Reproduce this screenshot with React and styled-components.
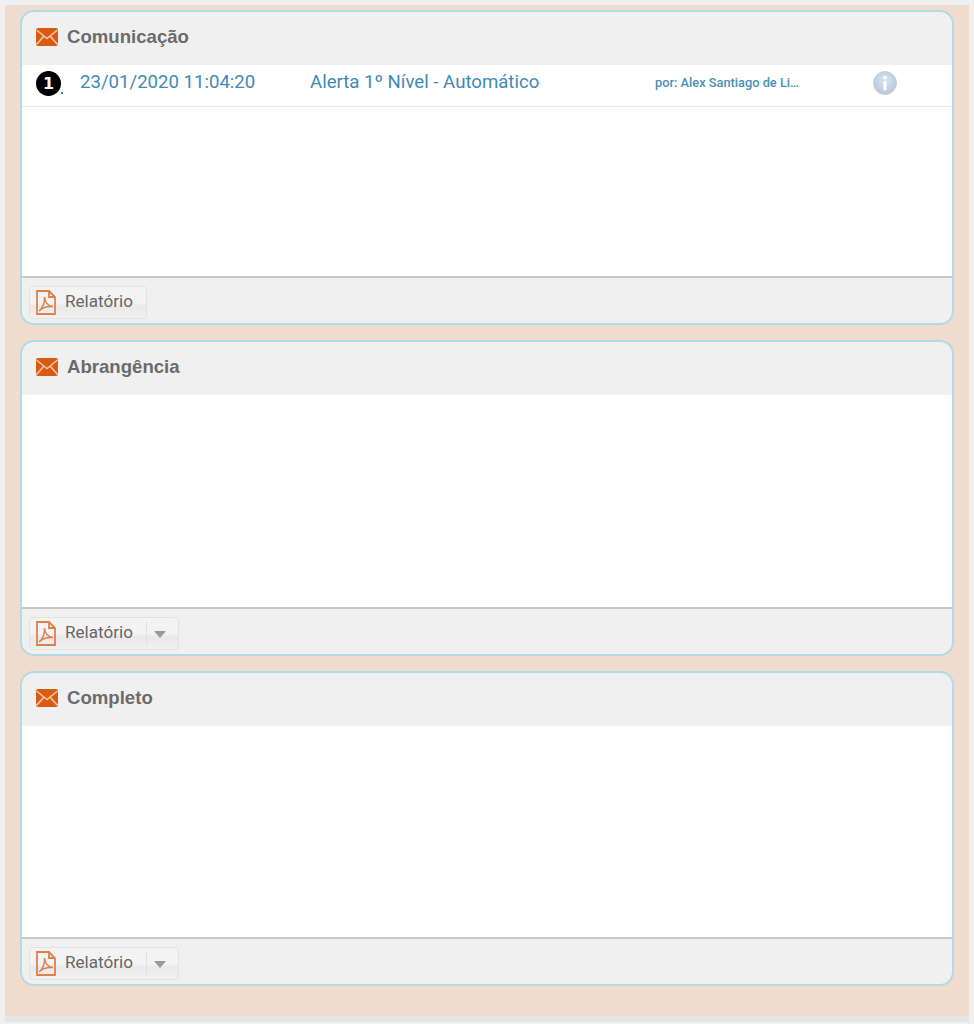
import styled, { createGlobalStyle } from "styled-components";

const GlobalStyle = createGlobalStyle`
    html, body {
        margin: 0;
        padding: 0;
        background: #f0f0f0;
        font-family: "Liberation Sans", Arial, sans-serif;
    }
`;

const Page = styled.div`
    width: 974px;
    height: 1024px;
    box-sizing: border-box;
    background: #f0f0f0;
    padding: 5px 5px 0;
`;

const Canvas = styled.div`
    height: 1017px;
    box-sizing: border-box;
    background: #f0dccd;
    border-bottom: 6px solid #e5e5e5;
    padding: 5px 15px 0;
    display: flex;
    flex-direction: column;
    gap: 15px;
`;

const Panel = styled.section`
    height: ${(props) => props.$height}px;
    flex: none;
    box-sizing: border-box;
    display: flex;
    flex-direction: column;
    background: #f0f0f0;
    border: 2px solid #b0dce8;
    border-radius: 14px;
    overflow: hidden;
`;

const PanelHeader = styled.header`
    height: 53px;
    flex: none;
    box-sizing: border-box;
    display: flex;
    align-items: center;
    gap: 9px;
    padding: 0 0 3px 14px;
`;

const PanelTitle = styled.h2`
    margin: 0;
    font-size: 18.6px;
    font-weight: bold;
    color: #6b6b6b;
`;

const PanelBody = styled.div`
    flex: 1;
    background: #fff;
    border-bottom: 2px solid #c8c8c8;
`;

const PanelFooter = styled.footer`
    height: 45px;
    flex: none;
    box-sizing: border-box;
    padding: 8px 0 0 7px;
`;

const Row = styled.div`
    height: 42px;
    box-sizing: border-box;
    display: flex;
    align-items: center;
    border-bottom: 1px solid #e8e8e8;
    color: #3f8ab5;
    position: relative;
`;

const Badge = styled.span`
    width: 25px;
    height: 25px;
    margin-left: 14px;
    margin-top: -4px;
    flex: none;
    border-radius: 50%;
    background: #000;
    color: #fff;
    font-family: "DejaVu Sans", sans-serif;
    font-size: 16px;
    font-weight: bold;
    display: flex;
    align-items: center;
    justify-content: center;
`;

const Dot = styled.span`
    position: absolute;
    left: 39px;
    top: 27px;
    width: 2px;
    height: 2px;
    background: #3f8ab5;
`;

const DateText = styled.span`
    width: 230px;
    margin-left: 19px;
    margin-top: -7px;
    flex: none;
    font-family: Roboto, sans-serif;
    font-size: 18.6px;
`;

const AlertText = styled.span`
    width: 345px;
    margin-top: -7px;
    flex: none;
    font-family: Roboto, sans-serif;
    font-size: 18.6px;
`;

const AuthorText = styled.span`
    width: 144px;
    margin-top: -6px;
    flex: none;
    font-family: Roboto, sans-serif;
    font-size: 12.8px;
    font-weight: 500;
    color: #4a90b8;
    white-space: nowrap;
`;

const InfoWrap = styled.span`
    width: 24px;
    height: 24px;
    margin-left: 74px;
    margin-top: -6px;
    flex: none;
    display: flex;
`;

const ReportButton = styled.div`
    display: inline-flex;
    align-items: center;
    height: 33px;
    box-sizing: border-box;
    padding: 0 13px 0 6px;
    border: 1px solid #e2e2e2;
    border-radius: 4px;
    background: linear-gradient(#f3f3f3 50%, #e9e9e9 62%, #f1f1f1);
    font-family: Roboto, sans-serif;
    font-size: 17.1px;
    color: #666;
`;

const ReportLabel = styled.span`
    margin-left: 9px;
    padding-bottom: 4px;
`;

const Divider = styled.span`
    width: 1px;
    height: 24px;
    margin-left: 13px;
    background: #e0e0e0;
`;

const Caret = styled.span`
    margin: 2px -1px 0 7px;
    width: 0;
    height: 0;
    border-left: 6px solid transparent;
    border-right: 6px solid transparent;
    border-top: 7px solid #999;
`;

const MailIcon = () => (
    <svg width="22" height="18" viewBox="0 0 22 18">
        <rect width="22" height="18" rx="2" fill="#d95a10" />
        <path
            d="M0.5 2 L11 10.5 L21.5 2 M0.5 16.5 L8 8 M21.5 16.5 L14 8"
            fill="none"
            stroke="#f3c8a8"
            strokeWidth="1.6"
        />
    </svg>
);

const PdfIcon = () => (
    <svg width="20" height="25" viewBox="0 0 20 25">
        <path
            d="M1 1 H13 L19 7 V24 H1 Z M13 1 V7 H19"
            fill="none"
            stroke="#e07f4c"
            strokeWidth="1.8"
        />
        <path
            d="M3 21 C7 18 9 12 8.5 7 C9 12 12 16 17 16.5 C12 16 7 17 3 21 Z"
            fill="none"
            stroke="#e07f4c"
            strokeWidth="1.5"
        />
    </svg>
);

const InfoIcon = () => (
    <svg width="24" height="24" viewBox="0 0 24 24">
        <defs>
            <radialGradient id="infoFill" cx="50%" cy="40%" r="60%">
                <stop offset="0%" stopColor="#dbe6f2" />
                <stop offset="100%" stopColor="#b4c7dc" />
            </radialGradient>
        </defs>
        <circle cx="12" cy="12" r="11.5" fill="url(#infoFill)" stroke="#c6d0da" />
        <circle cx="12" cy="6.5" r="1.8" fill="#fff" />
        <rect x="10.6" y="10" width="2.8" height="9.5" rx="1" fill="#fff" />
    </svg>
);

const panels = [
    { title: "Comunicação", height: 315, hasRow: true, hasMenu: false },
    { title: "Abrangência", height: 316, hasRow: false, hasMenu: true },
    { title: "Completo", height: 315, hasRow: false, hasMenu: true },
];

const App = () => (
    <Page>
        <GlobalStyle />
        <Canvas>
            {panels.map((panel) => (
                <Panel key={panel.title} $height={panel.height}>
                    <PanelHeader>
                        <MailIcon />
                        <PanelTitle>{panel.title}</PanelTitle>
                    </PanelHeader>
                    <PanelBody>
                        {panel.hasRow && (
                            <Row>
                                <Badge>1</Badge>
                                <Dot />
                                <DateText>23/01/2020 11:04:20</DateText>
                                <AlertText>Alerta 1º Nível - Automático</AlertText>
                                <AuthorText>por: Alex Santiago de Li…</AuthorText>
                                <InfoWrap>
                                    <InfoIcon />
                                </InfoWrap>
                            </Row>
                        )}
                    </PanelBody>
                    <PanelFooter>
                        <ReportButton>
                            <PdfIcon />
                            <ReportLabel>Relatório</ReportLabel>
                            {panel.hasMenu && (
                                <>
                                    <Divider />
                                    <Caret />
                                </>
                            )}
                        </ReportButton>
                    </PanelFooter>
                </Panel>
            ))}
        </Canvas>
    </Page>
);

export default App;
